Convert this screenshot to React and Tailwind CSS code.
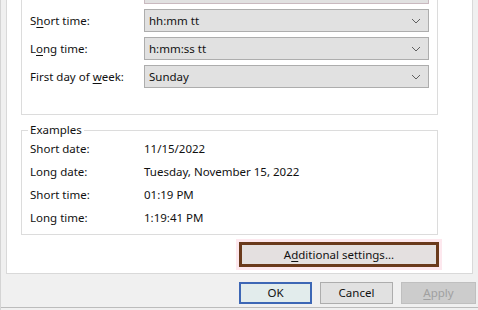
import React from "react";

const font = { fontFamily: '"Noto Sans", "Open Sans", sans-serif' };

function Chevron() {
  return (
    <svg width="10" height="6" viewBox="0 0 10 6" className="shrink-0">
      <path d="M1 1 L5 5 L9 1" fill="none" stroke="#606060" strokeWidth="1" />
    </svg>
  );
}

function U({ children }) {
  return <span className="underline underline-offset-2">{children}</span>;
}

function DropRow({ label, value }) {
  return (
    <div className="flex items-center h-[23px]">
      <div className="w-[122px] pl-[8px] whitespace-nowrap">{label}</div>
      <div className="w-[285px] h-[23px] bg-[#e1e1e1] border border-[#adadad] flex items-center justify-between pl-[4px] pr-[7px]">
        <span>{value}</span>
        <Chevron />
      </div>
    </div>
  );
}

const examples = [
  ["Short date:", "11/15/2022"],
  ["Long date:", "Tuesday, November 15, 2022"],
  ["Short time:", "01:19 PM"],
  ["Long time:", "1:19:41 PM"],
];

export default function App() {
  return (
    <div
      className="w-[478px] h-[310px] bg-[#f0f0f0] text-[11.5px] leading-[14px] text-[#111] overflow-hidden flex flex-col border-l border-[#d4d4d4]"
      style={font}
    >
      <div className="ml-[5px] w-[467px] h-[274px] bg-white border-x border-b border-[#d9d9d9] shrink-0">
        <div className="ml-[14px] w-[417px] h-[115px] border-x border-b border-[#dcdcdc] flex flex-col">
          <div className="ml-[122px] w-[285px] h-[4px] bg-[#e1e1e1] border-x border-b border-[#c9b9bf]" />
          <div className="mt-[5px] flex flex-col gap-[5px]">
            <DropRow label={<>S<U>h</U>ort time:</>} value="hh:mm tt" />
            <DropRow label={<>L<U>o</U>ng time:</>} value="h:mm:ss tt" />
            <DropRow label={<>First day of <U>w</U>eek:</>} value="Sunday" />
          </div>
        </div>

        <fieldset className="ml-[14px] mt-[8px] w-[417px] border border-[#dcdcdc] px-[6px] pb-[5px]">
          <legend className="px-[2px]">Examples</legend>
          {examples.map(([k, v]) => (
            <div key={k} className="flex items-center h-[23px] pl-[2px]">
              <div className="w-[114px]">{k}</div>
              <div>{v}</div>
            </div>
          ))}
        </fieldset>

        <div className="ml-[232px] mt-[7px] w-[200px] h-[25px] border-[3px] border-[#6a3a1c] bg-[#e4e0e0] shadow-[0_0_0_3px_#fde8ee] flex items-center justify-center">
          A<U>d</U>ditional settings...
        </div>
      </div>

      <div className="flex gap-[8px] ml-[238px] mt-[8px]">
        <div className="w-[73px] h-[22px] border-2 border-[#3d67b5] bg-[#e2ecec] flex items-center justify-center">
          OK
        </div>
        <div className="w-[73px] h-[22px] border border-[#adadad] bg-[#e1e1e1] flex items-center justify-center">
          Cancel
        </div>
        <div className="w-[75px] h-[22px] border border-[#bfbfbf] bg-[#cccccc] text-[#a0a0a0] flex items-center justify-center">
          <U>A</U>pply
        </div>
      </div>
      <div className="mt-[3px] h-px bg-[#bcbcbc]" />
    </div>
  );
}
